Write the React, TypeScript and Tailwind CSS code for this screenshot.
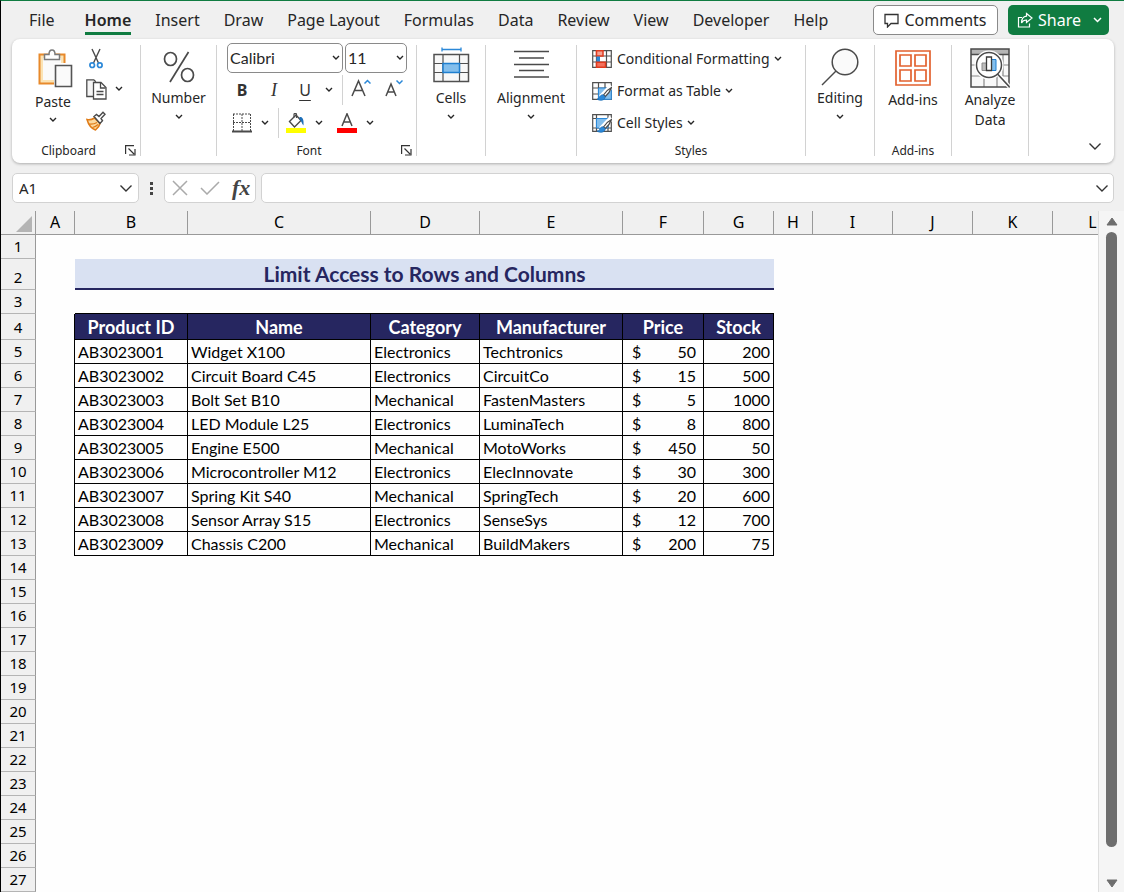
import type { ReactNode } from "react";

const TABS = ["Home", "Insert", "Draw", "Page Layout", "Formulas", "Data", "Review", "View", "Developer", "Help"];

const COLUMNS = [
  { name: "A", width: "w-[39px]" },
  { name: "B", width: "w-[113px]" },
  { name: "C", width: "w-[183px]" },
  { name: "D", width: "w-[109px]" },
  { name: "E", width: "w-[143px]" },
  { name: "F", width: "w-[81px]" },
  { name: "G", width: "w-[70px]" },
  { name: "H", width: "w-[39px]" },
  { name: "I", width: "w-[80px]" },
  { name: "J", width: "w-[80px]" },
  { name: "K", width: "w-[80px]" },
  { name: "L", width: "w-[80px]" },
];

const HEADINGS = ["Product ID", "Name", "Category", "Manufacturer", "Price", "Stock"];

const PRODUCTS = [
  { id: "AB3023001", name: "Widget X100", category: "Electronics", maker: "Techtronics", price: 50, stock: 200 },
  { id: "AB3023002", name: "Circuit Board C45", category: "Electronics", maker: "CircuitCo", price: 15, stock: 500 },
  { id: "AB3023003", name: "Bolt Set B10", category: "Mechanical", maker: "FastenMasters", price: 5, stock: 1000 },
  { id: "AB3023004", name: "LED Module L25", category: "Electronics", maker: "LuminaTech", price: 8, stock: 800 },
  { id: "AB3023005", name: "Engine E500", category: "Mechanical", maker: "MotoWorks", price: 450, stock: 50 },
  { id: "AB3023006", name: "Microcontroller M12", category: "Electronics", maker: "ElecInnovate", price: 30, stock: 300 },
  { id: "AB3023007", name: "Spring Kit S40", category: "Mechanical", maker: "SpringTech", price: 20, stock: 600 },
  { id: "AB3023008", name: "Sensor Array S15", category: "Electronics", maker: "SenseSys", price: 12, stock: 700 },
  { id: "AB3023009", name: "Chassis C200", category: "Mechanical", maker: "BuildMakers", price: 200, stock: 75 },
];

const EMPTY_ROWS = [14, 15, 16, 17, 18, 19, 20, 21, 22, 23, 24, 25, 26, 27];

const Chevron = () => (
  <svg width="8" height="6" viewBox="0 0 8 6" fill="none" stroke="#262626" strokeWidth="1.4" className="shrink-0">
    <path d="M1 1l3 3 3-3" />
  </svg>
);

const WideChevron = () => (
  <svg width="14" height="8" viewBox="0 0 14 8" fill="none" stroke="#333" strokeWidth="1.4">
    <path d="M1.500 1.500L7 7l5.500-5.500" />
  </svg>
);

const PasteIcon = () => (
  <svg width="35" height="39" viewBox="0 0 35 39" fill="none">
    <path d="M1.500 5.500h25v29h-25z" fill="#fbe3b4" stroke="#e8892b" strokeWidth="2" />
    <path d="M5 9h18v22H5z" fill="#fafafa" />
    <path d="M6.500 10.500v-5h4.500c0-6 6-6 6 0h4.500v5z" fill="#fff" stroke="#7a7a7a" strokeWidth="1.500" />
    <path d="M16 14h18v24H16z" fill="#fff" />
    <path d="M17.500 16.500h16v21h-16z" fill="#fafafa" stroke="#555" strokeWidth="1.600" />
  </svg>
);

const CutIcon = () => (
  <svg width="14" height="21" viewBox="0 0 14 21" fill="none">
    <path d="M3 1l6.500 14M11 1L4.500 15" stroke="#4a4a4a" strokeWidth="1.400" />
    <circle cx="3.200" cy="17.200" r="2.300" stroke="#2b88d8" strokeWidth="1.700" />
    <circle cx="10.800" cy="17.200" r="2.300" stroke="#2b88d8" strokeWidth="1.700" />
  </svg>
);

const CopyIcon = () => (
  <svg width="21" height="21" viewBox="0 0 21 21" fill="none" stroke="#4a4a4a" strokeWidth="1.300">
    <path d="M7 17.500H.8V.8h7l2 2" fill="#f5f5f5" />
    <path d="M7.500 3.500h7.500l5 5v11.500H7.500z" fill="#fff" />
    <path d="M14.500 4v5h5M10.500 12.500h7M10.500 15.500h7" />
  </svg>
);

const PainterIcon = () => (
  <svg width="20" height="20" viewBox="0 0 20 20" fill="none">
    <path d="M1 8.500c3 .8 5 0 7.500-1.500L14 12.500c-.5 2.500-2 4.500-4.500 6.500C5.500 17.500 2.500 14 1 8.500z" fill="#fbd9a0" stroke="#e07b16" strokeWidth="1.500" />
    <path d="M3 13c3 .3 6-.3 8-1.500M6.500 16.500c2.500-.5 4-1.500 5.500-3" stroke="#e07b16" strokeWidth="1.200" />
    <path d="M8 5.500l2.500-2 2.500 2L17 1.200l2 2-4 4.300 1.500 2.300-2.500 2.700z" fill="#fff" stroke="#4a4a4a" strokeWidth="1.400" />
  </svg>
);

const LauncherIcon = () => (
  <svg width="11" height="11" viewBox="0 0 11 11" fill="none" stroke="#333" strokeWidth="1.200">
    <path d="M.6 9V.6H9M3.500 3.500L9 9M10 4v6H4" />
  </svg>
);

const PercentIcon = () => (
  <svg width="32" height="32" viewBox="0 0 32 32" fill="none" stroke="#4a4a4a" strokeWidth="1.700">
    <ellipse cx="7.500" cy="8" rx="6" ry="6.500" />
    <ellipse cx="24.500" cy="24" rx="6" ry="6.500" />
    <path d="M25.500 1L7 31" />
  </svg>
);

const CellsIcon = () => (
  <svg width="37" height="36" viewBox="0 0 37 36" fill="none" className="mb-1">
    <path d="M9 2.500h19M9 .5v4M28 .5v4" stroke="#2b88d8" strokeWidth="1.300" />
    <path d="M1 7.500h34.500v27H1z" fill="#f8f8f8" stroke="#505050" strokeWidth="1.500" />
    <path d="M1 16.500h34.500M1 25.500h34.500M10 7.500v27M26.500 7.500v27" stroke="#505050" strokeWidth="1.200" />
    <path d="M10 16.500h16.500v9H10z" fill="#83beec" stroke="#1e7fd0" strokeWidth="1.500" />
  </svg>
);

const AlignIcon = () => (
  <svg width="37" height="29" viewBox="0 0 37 29" fill="none" stroke="#4a4a4a" strokeWidth="1.400" className="mb-1">
    <path d="M1 1.500h35M6 8h25M1 14.500h35M6 20.500h25M1 27h35" />
  </svg>
);

const SearchIcon = () => (
  <svg width="38" height="38" viewBox="0 0 38 38" fill="none" stroke="#4a4a4a" strokeWidth="1.500">
    <circle cx="24" cy="14" r="12.800" fill="#fafafa" />
    <path d="M15 23L1 37" />
  </svg>
);

const AddInsIcon = () => (
  <svg width="36" height="36" viewBox="0 0 36 36" fill="none" stroke="#e2622f" strokeWidth="1.700">
    <path d="M1 1h34v34H1z" />
    <path d="M5 5h11v11H5zM20 5h11v11H20zM5 20h11v11H5zM20 20h11v11H20z" />
  </svg>
);

const AnalyzeIcon = () => (
  <svg width="40" height="40" viewBox="0 0 40 40" fill="none">
    <path d="M1 1h38v38H1z" fill="#f8f8f8" />
    <path d="M1 1h38v5H1z" fill="#b5b5b5" />
    <path d="M1 17h38M1 28h38M14 28v11M27 28v11M33 6v22" stroke="#8a8a8a" strokeWidth="1.200" />
    <path d="M1 1h38v38H1zM1 6.500h38" stroke="#4a4a4a" strokeWidth="1.500" />
    <circle cx="19" cy="17" r="14.500" fill="#fff" />
    <circle cx="19" cy="17" r="12.500" fill="#fff" stroke="#4a4a4a" strokeWidth="1.500" />
    <path d="M12 15h4.500v7.500H12z" fill="#bdbdbd" stroke="#8a8a8a" />
    <path d="M21.500 11.500H26v11h-4.500z" fill="#83beec" stroke="#1e7fd0" />
    <path d="M16.500 9h5v13.500h-5z" fill="#fff" stroke="#3a3a3a" strokeWidth="1.300" />
    <path d="M29 27l10.500 12" stroke="#fff" strokeWidth="4" />
    <path d="M27.500 26L39.500 39" stroke="#4a4a4a" strokeWidth="1.600" />
  </svg>
);

const ConditionalIcon = () => (
  <svg width="20" height="18" viewBox="0 0 20 18" fill="none">
    <path d="M.7.7h18.600v16.600H.7zM.7 6h18.600M.7 12h18.600M4.500.7v16.600M14.500.7v16.600" fill="#fff" stroke="#505050" strokeWidth="1.200" />
    <path d="M4.500.8h6.500V6H4.500z" fill="#f4a294" stroke="#e03a1e" strokeWidth="1.500" />
    <path d="M4.500 6.500H8V12H4.500z" fill="#2b88d8" />
    <path d="M4.500 12.200h9v5h-9z" fill="#f4705c" stroke="#e03a1e" strokeWidth="1.500" />
  </svg>
);

const BrushOverlay = () => (
  <>
    <path d="M19.500 4L9 15" stroke="#fff" strokeWidth="5" />
    <path d="M19.500 5.500c-3 1.500-6 4.500-8 7.500l1.800 1.500c3-2.500 5-5.500 6.200-9z" fill="#fff" stroke="#4a4a4a" strokeWidth="1.300" />
    <path d="M11 12.800c-2 0-3 1.200-3.500 2.700-.4 1-1.500 1.500-2.500 1.500 3 2.200 8 1.500 8.200-2.200z" fill="#2b88d8" stroke="#1e6fb8" strokeWidth=".8" />
  </>
);

const TableIcon = () => (
  <svg width="20" height="19" viewBox="0 0 20 19" fill="none">
    <path d="M.7.7h18.600v16.600H.7zM.7 6h18.600M.7 12h18.600M6.500.7v16.600M13 .7v16.600" fill="#fff" stroke="#505050" strokeWidth="1.200" />
    <path d="M6.500 6h12.800v11.300H6.500z" fill="#83beec" stroke="#2b88d8" />
    <BrushOverlay />
  </svg>
);

const CellStylesIcon = () => (
  <svg width="20" height="19" viewBox="0 0 20 19" fill="none">
    <path d="M.7.7h18.600v16.600H.7zM.7 4.500h18.600M.7 14h18.600M4.500.7v16.600M16 .7v16.600" fill="#fff" stroke="#505050" strokeWidth="1.200" />
    <path d="M4.500 4.500H16V14H4.500z" fill="#83beec" stroke="#2b88d8" />
    <BrushOverlay />
  </svg>
);

const BordersIcon = () => (
  <svg width="20" height="20" viewBox="0 0 20 20" fill="none" stroke="#4a4a4a">
    <path d="M1 1h18M1 9.500h18M1.500 1v17M10 1v17M18.500 1v17" strokeDasharray="2 1" />
    <path d="M0 18.500h20" strokeWidth="2" />
  </svg>
);

const FillIcon = () => (
  <svg width="20" height="20" viewBox="0 0 20 20" fill="none">
    <path d="M3.500 8.500L10 2l5 5.500-6.500 6.500z" fill="#fff" stroke="#4a4a4a" strokeWidth="1.400" />
    <path d="M8 4.500V1.200C8 .2 10.500.2 10.500 1.200V5" stroke="#4a4a4a" strokeWidth="1.200" />
    <path d="M13.500 4c3-.5 4.500 2 4 8.500-1.500-1.500-2-4.500-4-6z" fill="#1e6fb8" />
    <path d="M0 15h20v5H0z" fill="#ffff00" />
  </svg>
);

const FontColorIcon = () => (
  <svg width="20" height="20" viewBox="0 0 20 20" fill="none">
    <path d="M5 13L10 .8 15 13M6.800 9h6.400" stroke="#4a4a4a" strokeWidth="1.500" />
    <path d="M0 15h20v5H0z" fill="#ff0000" />
  </svg>
);

const GrowFontIcon = () => (
  <svg width="20" height="18" viewBox="0 0 20 18" fill="none">
    <path d="M1 17L7.500 2 14 17M3.500 11.500h8" stroke="#4a4a4a" strokeWidth="1.500" />
    <path d="M13.500 4.500l3-3 3 3" stroke="#2b88d8" strokeWidth="1.500" />
  </svg>
);

const ShrinkFontIcon = () => (
  <svg width="18" height="18" viewBox="0 0 18 18" fill="none">
    <path d="M1 17L6 5l5 12M2.800 13h6.400" stroke="#4a4a4a" strokeWidth="1.500" />
    <path d="M11.500 1.500l3 3 3-3" stroke="#2b88d8" strokeWidth="1.500" />
  </svg>
);

const Group = ({ width, label, launcher, children }: { width: string; label?: string; launcher?: boolean; children: ReactNode }) => (
  <section className={`flex h-[111px] shrink-0 flex-col border-r border-[#d2d2d2] ${width}`}>
    <div className="flex-1">{children}</div>
    {label && (
      <div className="flex h-[11px] items-center text-[12px]">
        <span className="flex-1 text-center">{label}</span>
        {launcher && (
          <button aria-label={`${label} settings`} className="mr-1">
            <LauncherIcon />
          </button>
        )}
      </div>
    )}
  </section>
);

const BigButton = ({ icon, label, menu }: { icon: ReactNode; label: string; menu?: boolean }) => (
  <button className="flex w-full flex-col items-center px-2 text-[14px] leading-5">
    <span className={menu ? "flex h-[43px] items-center" : "flex h-[45px] items-center"}>{icon}</span>
    <span>{label}</span>
    {menu && (
      <span className="flex h-[18px] items-center">
        <Chevron />
      </span>
    )}
  </button>
);

const StyleButton = ({ icon, label }: { icon: ReactNode; label: string }) => (
  <button className="flex h-8 items-center text-[14px] leading-5">
    <span className="mr-[5px]">{icon}</span>
    {label}
    <span className="ml-1">
      <Chevron />
    </span>
  </button>
);

const Dropdown = ({ label, value, width }: { label: string; value: string; width: string }) => (
  <div className={`relative ${width}`}>
    <select
      aria-label={label}
      className="h-[30px] w-full appearance-none rounded-[5px] border border-[#8a8a8a] bg-white pl-[2px] font-[Lato,sans-serif] text-[16px]"
    >
      <option>{value}</option>
    </select>
    <span className="pointer-events-none absolute inset-y-0 right-[3px] flex items-center">
      <Chevron />
    </span>
  </div>
);

const Tabs = () => (
  <header className="flex h-[38px] items-center justify-between pr-[15px]">
    <div className="flex gap-[6px] pl-4 text-[16px] leading-6">
      <button className="px-3">File</button>
      <nav className="flex">
        {TABS.map((tab) => (
          <button key={tab} className="px-3">
            {tab === "Home" ? (
              <span className="block border-b-[3px] border-[#107c41] pt-[3px] font-semibold">{tab}</span>
            ) : (
              tab
            )}
          </button>
        ))}
      </nav>
    </div>
    <div className="flex gap-[10px] text-[16px]">
      <button className="flex h-[30px] w-[125px] items-center justify-center gap-[5px] rounded-[5px] border border-[#8a8a8a] bg-white">
        <svg width="15" height="15" viewBox="0 0 15 15" fill="none" stroke="#333" strokeWidth="1.300">
          <path d="M1 1.500h13v9H7L3.500 14v-3.500H1z" />
        </svg>
        Comments
      </button>
      <button className="flex h-[30px] w-[101px] items-center rounded-[5px] bg-[#107c41] pl-[9px] text-white">
        <svg width="16" height="16" viewBox="0 0 16 16" fill="none" stroke="#fff" strokeWidth="1.200" className="mr-[5px]">
          <path d="M5 5.500H1.500V15h11v-3.500" />
          <path d="M9.500 1.500L15 6l-5.500 4.500V8C7 8 5.500 9 4.500 11c0-4 2-6.500 5-6.800z" />
        </svg>
        Share
        <svg width="9" height="6" viewBox="0 0 9 6" fill="none" stroke="#fff" strokeWidth="1.500" className="ml-3">
          <path d="M1 1l3.500 3.500L8 1" />
        </svg>
      </button>
    </div>
  </header>
);

const Ribbon = () => (
  <div className="ml-[11px] mr-[10px] flex h-[124px] rounded-[8px] bg-white pt-[6px] shadow-[0_1px_3px_rgba(0,0,0,0.28)]">
    <Group width="w-[129px]" label="Clipboard" launcher>
      <div className="flex pl-[19px]">
        <button className="flex w-[44px] flex-col items-center text-[14px] leading-5">
          <span className="flex h-[47px] items-center pl-1">
            <PasteIcon />
          </span>
          Paste
          <span className="flex h-4 items-center">
            <Chevron />
          </span>
        </button>
        <div className="ml-[11px] flex flex-col items-start pt-[3px]">
          <button aria-label="Cut" className="flex h-[31px] w-5 justify-center">
            <CutIcon />
          </button>
          <button aria-label="Copy" className="flex h-8 items-start">
            <CopyIcon />
            <span className="ml-2 flex h-5 items-center">
              <Chevron />
            </span>
          </button>
          <button aria-label="Format Painter">
            <PainterIcon />
          </button>
        </div>
      </div>
    </Group>
    <Group width="w-[76px]">
      <BigButton icon={<PercentIcon />} label="Number" menu />
    </Group>
    <Group width="w-[200px]" label="Font" launcher>
      <div className="-mt-[2px] flex flex-col gap-px">
        <div className="flex gap-[2px] pl-[10px]">
          <Dropdown label="Font name" value="Calibri" width="w-[116px]" />
          <Dropdown label="Font size" value="11" width="w-[62px]" />
        </div>
        <div className="flex h-8 items-center pl-[15px] text-[16px] text-[#333]">
          <button className="w-5 font-bold">B</button>
          <button className="ml-3 w-5 font-[Liberation_Serif,serif] text-[18px] italic">I</button>
          <button className="ml-[11px] w-5 underline underline-offset-4">U</button>
          <button aria-label="Underline options" className="ml-[10px]">
            <Chevron />
          </button>
          <span className="ml-[9px] mr-2 h-[30px] w-px bg-[#d2d2d2]" />
          <button aria-label="Increase font size" className="mb-1">
            <GrowFontIcon />
          </button>
          <button aria-label="Decrease font size" className="mb-1 ml-[14px]">
            <ShrinkFontIcon />
          </button>
        </div>
        <div className="flex h-8 items-center pl-[15px]">
          <button aria-label="Borders">
            <BordersIcon />
          </button>
          <button aria-label="Border options" className="ml-[9px]">
            <Chevron />
          </button>
          <span className="ml-[9px] mr-[7px] h-[30px] w-px bg-[#d2d2d2]" />
          <button aria-label="Fill color">
            <FillIcon />
          </button>
          <button aria-label="Fill color options" className="ml-[9px]">
            <Chevron />
          </button>
          <button aria-label="Font color" className="ml-[14px]">
            <FontColorIcon />
          </button>
          <button aria-label="Font color options" className="ml-[9px]">
            <Chevron />
          </button>
        </div>
      </div>
    </Group>
    <Group width="w-[69px]">
      <BigButton icon={<CellsIcon />} label="Cells" menu />
    </Group>
    <Group width="w-[91px]">
      <BigButton icon={<AlignIcon />} label="Alignment" menu />
    </Group>
    <Group width="w-[229px]" label="Styles">
      <div className="-mt-[2px] pl-[15px]">
        <StyleButton icon={<ConditionalIcon />} label="Conditional Formatting" />
        <StyleButton icon={<TableIcon />} label="Format as Table" />
        <StyleButton icon={<CellStylesIcon />} label="Cell Styles" />
      </div>
    </Group>
    <Group width="w-[69px]">
      <BigButton icon={<SearchIcon />} label="Editing" menu />
    </Group>
    <Group width="w-[77px]" label="Add-ins">
      <BigButton icon={<AddInsIcon />} label="Add-ins" />
    </Group>
    <Group width="w-[77px]">
      <BigButton icon={<AnalyzeIcon />} label="Analyze Data" />
    </Group>
    <div className="flex flex-1 items-end justify-end pb-[13px] pr-3">
      <button aria-label="Collapse ribbon">
        <WideChevron />
      </button>
    </div>
  </div>
);

const FormulaBar = () => (
  <div className="ml-[11px] mr-[10px] mt-[10px] flex h-[30px] items-stretch">
    <div className="flex w-[127px] items-center rounded-[5px] border border-[#d2d2d2] bg-white pr-[5px]">
      <input aria-label="Name box" defaultValue="A1" className="min-w-0 flex-1 bg-transparent pl-[6px] text-[15px] outline-none" />
      <button aria-label="Open name list">
        <WideChevron />
      </button>
    </div>
    <div className="flex w-[25px] flex-col items-center justify-center gap-[2px]">
      <span className="size-[3px] bg-[#444]" />
      <span className="size-[3px] bg-[#444]" />
      <span className="size-[3px] bg-[#444]" />
    </div>
    <div className="flex w-[92px] items-center gap-3 rounded-[5px] border border-[#d2d2d2] bg-white pl-[7px]">
      <button aria-label="Cancel">
        <svg width="16" height="16" viewBox="0 0 16 16" fill="none" stroke="#aaa" strokeWidth="1.500">
          <path d="M1 1l14 14M15 1L1 15" />
        </svg>
      </button>
      <button aria-label="Enter">
        <svg width="20" height="14" viewBox="0 0 20 14" fill="none" stroke="#aaa" strokeWidth="1.500">
          <path d="M1 7l6 6L19 1" />
        </svg>
      </button>
      <button className="font-[Liberation_Serif,serif] text-[22px] font-bold italic leading-6 text-[#444]">fx</button>
    </div>
    <div className="ml-[5px] flex flex-1 items-center rounded-[5px] border border-[#d2d2d2] bg-white pr-[4px]">
      <input aria-label="Formula" className="min-w-0 flex-1 bg-transparent px-2 text-[15px] outline-none" />
      <button aria-label="Expand formula bar">
        <WideChevron />
      </button>
    </div>
  </div>
);

const RowHeader = ({ row }: { row: number }) => (
  <th
    scope="row"
    className="border-b border-r border-[#b4b4b4] border-r-[#999] bg-[#f0f0f0] p-0 pb-[2px] align-bottom font-[Noto_Sans,sans-serif] text-[15px] font-normal leading-5"
  >
    {row}
  </th>
);

const DATA_CELL = "border-b border-r border-black p-0 pl-[3px] leading-[22px]";

const Sheet = () => (
  <table className="w-[1132px] table-fixed border-separate border-spacing-0 text-[16px] text-black">
    <thead>
      <tr className="h-6">
        <th className="w-[35px] border-b border-r border-[#999] bg-[#f0f0f0] p-0">
          <button aria-label="Select all" className="flex w-full justify-end pr-[3px] pt-[2px]">
            <svg width="16" height="16" viewBox="0 0 16 16">
              <path d="M16 0v16H0z" fill="#b4b4b4" />
            </svg>
          </button>
        </th>
        {COLUMNS.map((column) => (
          <th
            key={column.name}
            scope="col"
            className={`border-b border-r border-[#999] bg-[#f0f0f0] p-0 pb-[2px] text-[16px] font-normal leading-5 ${column.width}`}
          >
            {column.name}
          </th>
        ))}
      </tr>
    </thead>
    <tbody>
      <tr className="h-6">
        <RowHeader row={1} />
        <td colSpan={12} />
      </tr>
      <tr className="h-[31px]">
        <RowHeader row={2} />
        <td />
        <td colSpan={6} className="border-b-2 border-[#262660] bg-[#d9e1f2] p-0 text-center font-[Lato,sans-serif] text-[21px] font-bold leading-7 text-[#262660]">
          Limit Access to Rows and Columns
        </td>
        <td colSpan={5} />
      </tr>
      <tr className="h-6">
        <RowHeader row={3} />
        <td />
        <td colSpan={6} className="border-b border-black" />
        <td colSpan={5} />
      </tr>
      <tr className="h-[26px]">
        <RowHeader row={4} />
        <td className="border-r border-black" />
        {HEADINGS.map((heading) => (
          <td key={heading} className="border-b border-r border-black bg-[#262660] p-0 text-center font-[Lato,sans-serif] text-[18px] font-bold leading-6 text-white">
            {heading}
          </td>
        ))}
        <td colSpan={5} />
      </tr>
      {PRODUCTS.map((product, index) => (
        <tr key={product.id} className="h-6 font-[Lato,sans-serif]">
          <RowHeader row={index + 5} />
          <td className="border-r border-black" />
          <td className={DATA_CELL}>{product.id}</td>
          <td className={DATA_CELL}>{product.name}</td>
          <td className={DATA_CELL}>{product.category}</td>
          <td className={DATA_CELL}>{product.maker}</td>
          <td className={DATA_CELL}>
            <span className="flex justify-between pl-[6px] pr-[7px]">
              <span>$</span>
              <span>{product.price}</span>
            </span>
          </td>
          <td className={`${DATA_CELL} pr-[3px] text-right`}>{product.stock}</td>
          <td colSpan={5} />
        </tr>
      ))}
      {EMPTY_ROWS.map((row) => (
        <tr key={row} className="h-6">
          <RowHeader row={row} />
          <td colSpan={12} />
        </tr>
      ))}
    </tbody>
  </table>
);

const Scrollbar = () => (
  <div className="flex w-[26px] shrink-0 flex-col items-center border-l border-[#dedede] bg-[#f5f5f5] pb-1 pt-[6px]">
    <button aria-label="Scroll up">
      <svg width="12" height="9" viewBox="0 0 12 9" className="block">
        <path d="M6 1l5 7H1z" fill="#6e6e6e" stroke="#6e6e6e" strokeLinejoin="round" />
      </svg>
    </button>
    <div className="mb-8 mt-[6px] w-[11px] flex-1 rounded-full bg-[#6e6e6e]" />
    <button aria-label="Scroll down">
      <svg width="12" height="9" viewBox="0 0 12 9" className="block">
        <path d="M1 1h10L6 8z" fill="#6e6e6e" stroke="#6e6e6e" strokeLinejoin="round" />
      </svg>
    </button>
  </div>
);

export default function App() {
  return (
    <div className="flex min-h-screen flex-col border-l border-t border-l-black border-t-[#107c41] bg-[#f0f0f0] font-[Noto_Sans,sans-serif] text-[#262626]">
      <Tabs />
      <Ribbon />
      <FormulaBar />
      <main className="mt-2 flex flex-1">
        <div className="min-w-0 flex-1 overflow-hidden bg-[#fefefe]">
          <Sheet />
        </div>
        <Scrollbar />
      </main>
    </div>
  );
}
